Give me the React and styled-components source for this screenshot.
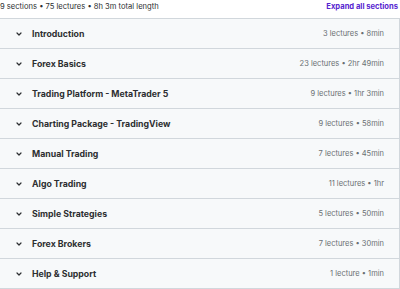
import React from "react";
import styled, { createGlobalStyle } from "styled-components";

const Global = createGlobalStyle`
  html, body { margin: 0; padding: 0; background: #fff; overflow: hidden; }
  body { font-family: Inter, "Noto Sans", sans-serif; color: #2d2f31; }
`;

const Page = styled.div`
  width: 400px;
  height: 289px;
  overflow: hidden;
`;

const Header = styled.div`
  display: flex;
  justify-content: space-between;
  align-items: center;
  height: 13px;
  padding: 0 2px 0 0;
  margin-bottom: 5px;
`;

const Summary = styled.span`
  font-size: 7.6px;
  color: #2d2f31;
`;

const ExpandAll = styled.span`
  font-size: 7.6px;
  font-weight: 700;
  color: #5624d0;
`;

const List = styled.div`
  margin-left: -1px;
  border: 1px solid #d1d7dc;
`;

const Row = styled.div`
  display: flex;
  align-items: center;
  height: 29px;
  padding: 0 15px 0 15px;
  background: #f7f9fa;
  & + & { border-top: 1px solid #d1d7dc; }
`;

const Chevron = styled.svg`
  width: 8px;
  height: 8px;
  margin-right: 9px;
  flex: none;
`;

const Title = styled.span`
  flex: 1;
  font-size: 8.75px;
  font-weight: 700;
  color: #2d2f31;
`;

const Meta = styled.span`
  font-size: 7.5px;
  color: #6a6f73;
`;

const sections = [
  ["Introduction", "3 lectures • 8min"],
  ["Forex Basics", "23 lectures • 2hr 49min"],
  ["Trading Platform - MetaTrader 5", "9 lectures • 1hr 3min"],
  ["Charting Package - TradingView", "9 lectures • 58min"],
  ["Manual Trading", "7 lectures • 45min"],
  ["Algo Trading", "11 lectures • 1hr"],
  ["Simple Strategies", "5 lectures • 50min"],
  ["Forex Brokers", "7 lectures • 30min"],
  ["Help & Support", "1 lecture • 1min"],
];

export default function App() {
  return (
    <Page>
      <Global />
      <Header>
        <Summary>9 sections • 75 lectures • 8h 3m total length</Summary>
        <ExpandAll>Expand all sections</ExpandAll>
      </Header>
      <List>
        {sections.map(([t, m]) => (
          <Row key={t}>
            <Chevron viewBox="0 0 8 8">
              <path d="M2 3 L4 5 L6 3" fill="none" stroke="#2d2f31" strokeWidth="1.2" strokeLinecap="round" strokeLinejoin="round" />
            </Chevron>
            <Title>{t}</Title>
            <Meta>{m}</Meta>
          </Row>
        ))}
      </List>
    </Page>
  );
}
